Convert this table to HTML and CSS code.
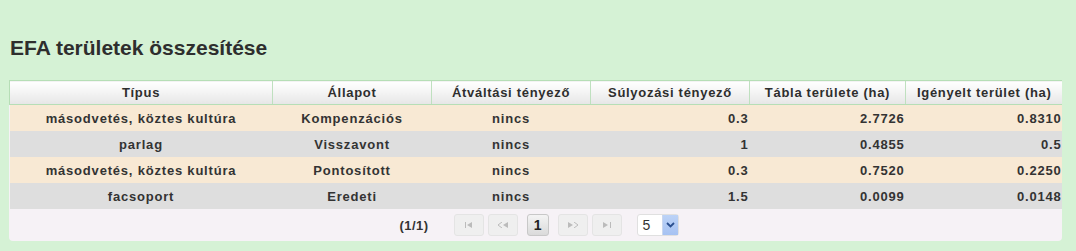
FILE: index.html
```html
<!DOCTYPE html>
<html>
<head>
<meta charset="utf-8">
<link rel="stylesheet" href="styles.css">
</head>
<body>
<div class="page">
  <h1 class="title">EFA területek összesítése</h1>
  <div class="panel">
    <table class="grid">
      <colgroup>
        <col style="width:263px"><col style="width:159px"><col style="width:159px"><col style="width:159px"><col style="width:156px"><col style="width:157px">
      </colgroup>
      <thead>
        <tr>
          <th>Típus</th><th>Állapot</th><th>Átváltási tényező</th><th>Súlyozási tényező</th><th>Tábla területe (ha)</th><th>Igényelt terület (ha)</th>
        </tr>
      </thead>
      <tbody>
        <tr class="odd"><td class="c">másodvetés, köztes kultúra</td><td class="c">Kompenzációs</td><td class="c">nincs</td><td class="r">0.3</td><td class="r">2.7726</td><td class="r">0.8310</td></tr>
        <tr class="even"><td class="c">parlag</td><td class="c">Visszavont</td><td class="c">nincs</td><td class="r">1</td><td class="r">0.4855</td><td class="r">0.5</td></tr>
        <tr class="odd"><td class="c">másodvetés, köztes kultúra</td><td class="c">Pontosított</td><td class="c">nincs</td><td class="r">0.3</td><td class="r">0.7520</td><td class="r">0.2250</td></tr>
        <tr class="even"><td class="c">facsoport</td><td class="c">Eredeti</td><td class="c">nincs</td><td class="r">1.5</td><td class="r">0.0099</td><td class="r">0.0148</td></tr>
      </tbody>
    </table>
    <div class="pager">
      <span class="pcount">(1/1)</span>
      <span class="pbtn">
        <svg width="8" height="6" viewBox="0 0 8 6"><rect x="0" y="0" width="1" height="6" fill="#bbb"/><path d="M7 0 L2 3 L7 6 Z" fill="#bbb"/></svg>
      </span>
      <span class="pbtn">
        <svg width="10" height="6" viewBox="0 0 10 6"><path d="M4 0 L0 3 L4 6" fill="none" stroke="#bbb" stroke-width="1"/><path d="M10 0 L5 3 L10 6 Z" fill="#bbb"/></svg>
      </span>
      <span class="pnum">1</span>
      <span class="pbtn">
        <svg width="10" height="6" viewBox="0 0 10 6"><path d="M0 0 L5 3 L0 6 Z" fill="#bbb"/><path d="M6 0 L10 3 L6 6" fill="none" stroke="#bbb" stroke-width="1"/></svg>
      </span>
      <span class="pbtn">
        <svg width="8" height="6" viewBox="0 0 8 6"><path d="M0 0 L5 3 L0 6 Z" fill="#bbb"/><rect x="7" y="0" width="1" height="6" fill="#bbb"/></svg>
      </span>
      <span class="psel"><span class="pval">5</span><span class="parrow"><svg width="9" height="6" viewBox="0 0 9 6"><path d="M1 1 L4.5 4.5 L8 1" fill="none" stroke="#2a4f8f" stroke-width="1.8"/></svg></span></span>
    </div>
  </div>
</div>
</body>
</html>
```
FILE: styles.css
```css
html, body {
  margin: 0;
  padding: 0;
  background: #d5f2d5;
}
.page {
  padding: 35px 0 0 9px;
  width: 1054px;
}
.title {
  margin: 0 0 19px 1px;
  font-family: "Liberation Sans", Arial, sans-serif;
  font-weight: bold;
  font-size: 21px;
  line-height: 26px;
  color: #2e2e2e;
}
.panel {
  width: 1053px;
  border-radius: 0 0 4px 4px;
  overflow: hidden;
  background: #f6f2f6;
}
.grid {
  border-collapse: collapse;
  table-layout: fixed;
  width: 1053px;
  font-family: "Liberation Sans", Arial, sans-serif;
  font-size: 13px;
  font-weight: bold;
  color: #333;
}
.grid th {
  height: 23px;
  padding: 0;
  background: linear-gradient(#ffffff, #f3f3f3 50%, #e6e6e6);
  border-top: 1px solid #b6deb6;
  border-left: 1px solid #bfe0bf;
  border-bottom: 1px solid #b6deb6;
  text-align: center;
  font-weight: bold;
  color: #2e2e2e;
  letter-spacing: 0.7px;
}
.grid th:first-child { border-left: 1px solid #b6deb6; }
.grid td {
  height: 26px;
  padding: 0 4px;
  letter-spacing: 0.8px;
}
.grid td.c { text-align: center; }
.grid td.r { text-align: right; padding-right: 1px; }
.grid tr.odd td { background: #f8e9d4; }
.grid tr.even td { background: #dedede; }
.pager {
  height: 32px;
  display: flex;
  align-items: center;
  justify-content: center;
  padding-left: 6px;
  font-family: "Liberation Sans", Arial, sans-serif;
  font-size: 13px;
  font-weight: bold;
  color: #333;
}
.pcount { margin-right: 25px; letter-spacing: 0.5px; margin-left: 1px; }
.pbtn {
  width: 28px;
  height: 20px;
  border: 1px solid #e4e4e4;
  border-radius: 3px;
  background: #efefef;
  display: flex;
  align-items: center;
  justify-content: center;
  margin-right: 4px;
}
.pnum {
  width: 20px;
  height: 20px;
  border: 1px solid #c8c8c8;
  border-radius: 3px;
  background: linear-gradient(#f4f4f4, #dadada);
  display: flex;
  align-items: center;
  justify-content: center;
  margin: 0 9px 0 5px;
  font-size: 14px;
  color: #222;
}
.psel {
  margin-left: 11px;
  width: 40px;
  height: 20px;
  border: 1px solid #e0e0e0;
  border-radius: 3px;
  background: #fff;
  display: flex;
  align-items: stretch;
  font-weight: normal;
  font-size: 14px;
}
.pval { flex: 1; padding-left: 5px; line-height: 20px; }
.parrow {
  width: 15px;
  background: linear-gradient(#bcd3f7, #a6c2f2);
  display: flex;
  align-items: center;
  justify-content: center;
  border-left: 1px solid #c9d7ef;
}
```
